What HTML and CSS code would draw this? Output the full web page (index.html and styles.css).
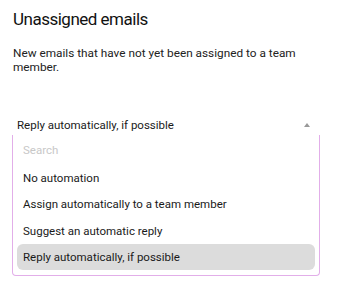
FILE: index.html
```html
<!DOCTYPE html>
<html lang="en">

<head>
	<meta charset="UTF-8">
	<meta name="viewport" content="width=device-width, initial-scale=1.0">
	<title>Unassigned emails</title>
	<link rel="stylesheet" href="styles.css">
</head>

<body>
	<div class="setting">
		<h2 class="setting-title">Unassigned emails</h2>
		<p class="setting-desc">New emails that have not yet been assigned to a team member.</p>

		<div class="select">
			<div class="select-value">
				<span>Reply automatically, if possible</span>
				<span class="select-arrow"></span>
			</div>
			<!-- 下拉菜单 -->
			<div class="select-menu">
				<input class="select-search" type="text" placeholder="Search">
				<ul class="select-options">
					<li>No automation</li>
					<li>Assign automatically to a team member</li>
					<li>Suggest an automatic reply</li>
					<li class="active">Reply automatically, if possible</li>
				</ul>
			</div>
		</div>
	</div>
</body>

</html>
```

FILE: styles.css
```css
body {
	margin: 0;
	background: #fff;
	font-family: Roboto, "Liberation Sans", sans-serif;
	color: #1a1a1a
}

.setting {
	padding: 9px 17px 0 13px
}

.setting-title {
	margin: 0;
	font-size: 17px;
	font-weight: 400;
	letter-spacing: -0.5px;
	line-height: 21px;
	color: #111
}

.setting-desc {
	margin: 16px 0 0;
	font-size: 11.8px;
	line-height: 14px;
	color: #222
}

.select {
	margin-top: 44px
}

.select-value {
	display: flex;
	align-items: center;
	justify-content: space-between;
	padding: 0 10px 0 4px;
	font-size: 11.5px;
	line-height: 14px;
	height: 14px
}

.select-arrow {
	width: 0;
	height: 0;
	border-left: 3px solid transparent;
	border-right: 3px solid transparent;
	border-bottom: 4px solid #999
}

.select-menu {
	margin-top: 3px;
	margin-left: -1px;
	border: 1px solid #e2aee9;
	border-top: none;
	border-radius: 0 0 4px 4px;
	padding: 0 4px 5px
}

.select-search {
	display: block;
	width: 100%;
	box-sizing: border-box;
	border: none;
	outline: none;
	padding: 0 6px;
	height: 30px;
	font-family: inherit;
	font-size: 11.5px;
	color: #222
}

.select-search::placeholder {
	color: #c8c8c8
}

.select-options {
	list-style: none;
	margin: 0;
	padding: 0
}

.select-options li {
	height: 26.3px;
	line-height: 26.3px;
	padding: 0 6px;
	font-size: 11.5px;
	border-radius: 6px;
	color: #1a1a1a
}

.select-options li.active {
	background: #dcdcdc
}
```
